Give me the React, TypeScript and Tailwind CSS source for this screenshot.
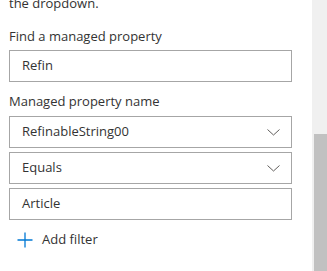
import React from "react";

function Chevron() {
  return (
    <svg width="13" height="7" viewBox="0 0 13 7" className="shrink-0">
      <path d="M0.5 0.5 L6.5 6 L12.5 0.5" fill="none" stroke="#605e5c" strokeWidth="1" />
    </svg>
  );
}

function PlusIcon() {
  return (
    <svg width="16" height="16" viewBox="0 0 16 16" className="shrink-0">
      <path d="M8 0.5 V15.5 M0.5 8 H15.5" fill="none" stroke="#0078d4" strokeWidth="1.3" />
    </svg>
  );
}

export default function App() {
  return (
    <div
      className="flex h-[271px] w-[327px] overflow-hidden bg-white text-[#333333]"
      style={{ fontFamily: '"Open Sans", "Liberation Sans", sans-serif' }}
    >
      <div className="flex w-[312px] flex-col pl-[9px] pr-[20px] text-[13px]">
        <div className="mt-[-7px] leading-[20px]">the dropdown.</div>
        <div className="mt-[13px] leading-[20px]">Find a managed property</div>
        <div className="mt-[4px] flex h-[32px] items-center border border-[#a6a6a6] px-[12px]">Refin</div>
        <div className="mt-[9px] leading-[20px]">Managed property name</div>
        <div className="mt-[5px] flex h-[32px] items-center justify-between border border-[#a6a6a6] pl-[12px] pr-[11px]">
          <span>RefinableString00</span>
          <Chevron />
        </div>
        <div className="mt-[4px] flex h-[32px] items-center justify-between border border-[#a6a6a6] pl-[12px] pr-[11px]">
          <span>Equals</span>
          <Chevron />
        </div>
        <div className="mt-[4px] flex h-[32px] items-center border border-[#a6a6a6] px-[12px]">Article</div>
        <div className="mt-[12px] flex h-[16px] items-center pl-[8px]">
          <PlusIcon />
          <span className="ml-[9px]">Add filter</span>
        </div>
      </div>
      <div className="flex w-[15px] flex-col bg-[#f0f0f0] pl-[2px]">
        <div className="mt-[134px] flex-1 bg-[#c1c1c1]" />
      </div>
    </div>
  );
}
